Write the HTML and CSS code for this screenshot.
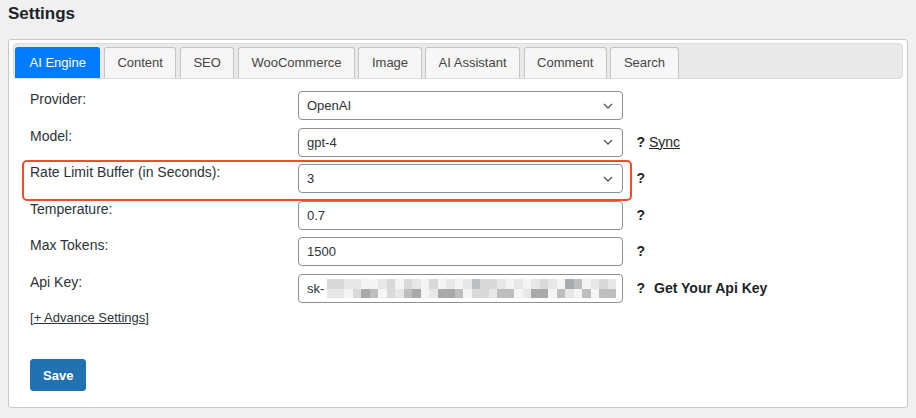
FILE: index.html
```html
<!DOCTYPE html>
<html lang="en">
<head>
<meta charset="utf-8">
<title>Settings</title>
<link rel="stylesheet" href="styles.css">
</head>
<body>
<div class="wrap">
  <h1 class="title">Settings</h1>
  <div class="panel">
    <ul class="tabs">
      <li class="tab active">AI Engine</li>
      <li class="tab">Content</li>
      <li class="tab">SEO</li>
      <li class="tab">WooCommerce</li>
      <li class="tab">Image</li>
      <li class="tab">AI Assistant</li>
      <li class="tab">Comment</li>
      <li class="tab">Search</li>
    </ul>
    <form class="form">
      <div class="rows">
        <div class="row">
          <label class="label">Provider:</label>
          <select class="field select"><option>OpenAI</option></select>
          <span class="extra"></span>
        </div>
        <div class="row">
          <label class="label">Model:</label>
          <select class="field select"><option>gpt-4</option></select>
          <span class="extra"><b class="q">?</b> <a class="link" href="#">Sync</a></span>
        </div>
        <div class="row highlight">
          <label class="label">Rate Limit Buffer (in Seconds):</label>
          <select class="field select"><option>3</option></select>
          <span class="extra"><b class="q">?</b></span>
        </div>
        <div class="row">
          <label class="label">Temperature:</label>
          <input class="field" type="text" value="0.7">
          <span class="extra"><b class="q">?</b></span>
        </div>
        <div class="row">
          <label class="label">Max Tokens:</label>
          <input class="field" type="text" value="1500">
          <span class="extra"><b class="q">?</b></span>
        </div>
        <div class="row">
          <label class="label">Api Key:</label>
          <div class="field keyfield">
            <span class="sk">sk-</span>
            <span class="blur">
              <i class="c"></i><i class="c"></i><i class="b"></i><i class="b"></i><i class="a"></i><i class="a"></i><i class="b"></i><i class="c"></i><i class="a"></i><i class="c"></i><i class="b"></i><i class="a"></i><i class="c"></i><i class="a"></i><i class="b"></i><i class="a"></i><i class="b"></i><i class="d"></i><i class="c"></i><i class="c"></i><i class="b"></i><i class="a"></i><i class="b"></i><i class="a"></i><i class="b"></i><i class="c"></i><i class="b"></i><i class="a"></i><i class="e"></i><i class="d"></i><i class="a"></i><i class="b"></i><i class="c"></i><i class="b"></i>
              <i class="b"></i><i class="b"></i><i class="a"></i><i class="c"></i><i class="e"></i><i class="d"></i><i class="a"></i><i class="c"></i><i class="b"></i><i class="d"></i><i class="e"></i><i class="a"></i><i class="b"></i><i class="e"></i><i class="e"></i><i class="d"></i><i class="a"></i><i class="c"></i><i class="c"></i><i class="b"></i><i class="d"></i><i class="d"></i><i class="a"></i><i class="b"></i><i class="e"></i><i class="e"></i><i class="a"></i><i class="d"></i><i class="b"></i><i class="a"></i><i class="d"></i><i class="a"></i><i class="d"></i><i class="d"></i>
            </span>
          </div>
          <span class="extra"><b class="q">?</b><b class="getkey">Get Your Api Key</b></span>
        </div>
      </div>
      <p class="advance">[<a class="link" href="#">+ Advance Settings</a>]</p>
      <button class="save" type="button">Save</button>
    </form>
  </div>
</div>
</body>
</html>
```

FILE: styles.css
```css
* { box-sizing: border-box; }

html, body {
  margin: 0;
  padding: 0;
  background: #f0f0f1;
}

body {
  font-family: "Liberation Sans", Arial, sans-serif;
  color: #2c3338;
}

.wrap {
  padding: 4px 8px 0;
}

.title {
  margin: 0;
  font-size: 17px;
  line-height: 20px;
  font-weight: bold;
  color: #1d2327;
}

.panel {
  margin-top: 15px;
  background: #fff;
  border: 1px solid #c9c9cb;
  border-radius: 3px;
  padding: 3px 4px 15px;
  height: 369px;
}

.tabs {
  list-style: none;
  margin: 0;
  padding: 3px 1px 0;
  display: flex;
  gap: 3.5px;
  background: #e9e9e9;
  border: 1px solid #dcdcdc;
  border-radius: 4px;
  height: 36px;
}

.tab {
  height: 31px;
  line-height: 30px;
  padding: 0 12.5px;
  font-size: 13px;
  color: #454545;
  background: #f6f6f6;
  border: 1px solid #c5c5c5;
  border-bottom: none;
  border-radius: 3px 3px 0 0;
}

.tab.active {
  background: #007bff;
  border-color: #007bff;
  color: #fff;
  padding: 0 13.5px;
}

.form {
  padding: 12px 17px 0;
}

.rows {
  display: flex;
  flex-direction: column;
  gap: 7.5px;
}

.row {
  position: relative;
  display: grid;
  grid-template-columns: 268px 325px auto;
  align-items: start;
  height: 29px;
}

.row.highlight::before {
  content: "";
  position: absolute;
  left: -8px;
  top: -4px;
  width: 606px;
  height: 37px;
  border: 2px solid #ef4d2b;
  border-radius: 5px;
  pointer-events: none;
}

.label {
  font-size: 14px;
  line-height: 17px;
  color: #2c3338;
}

.field {
  height: 29px;
  width: 325px;
  margin: 0;
  border: 1px solid #8c8f94;
  border-radius: 4px;
  padding: 0 8px;
  font-family: "Liberation Sans", Arial, sans-serif;
  font-size: 13px;
  color: #2c3338;
  background: #fff;
  outline: none;
}

.select {
  appearance: none;
  -webkit-appearance: none;
  background: #fff url("data:image/svg+xml;utf8,<svg xmlns='http://www.w3.org/2000/svg' width='10' height='6' viewBox='0 0 10 6'><polyline points='1,1 5,5 9,1' fill='none' stroke='%2350575e' stroke-width='1.3'/></svg>") no-repeat right 9px center;
  background-size: 10px 6px;
}

.extra {
  align-self: center;
  margin-left: 13.5px;
  font-size: 14px;
  line-height: 17px;
  color: #1d2327;
  white-space: nowrap;
}

.q {
  font-weight: bold;
}

.link {
  color: #1d2327;
  text-decoration: underline;
}

.getkey {
  margin-left: 9px;
  font-weight: bold;
}

.keyfield {
  display: flex;
  align-items: center;
}

.sk {
  margin-right: 3px;
}

.blur {
  display: grid;
  grid-template-columns: repeat(34, 8.5px);
  grid-template-rows: 9.5px 9.5px;
  margin-top: 1px;
}

.blur i { display: block; }
.blur .a { background: #f4f4f4; }
.blur .b { background: #e7e7e7; }
.blur .c { background: #d9d9d9; }
.blur .d { background: #bdbebf; }
.blur .e { background: #a7a9ab; }

.advance {
  margin: 7px 0 0;
  font-size: 13px;
  line-height: 16px;
  color: #2c3338;
}

.advance .link {
  color: #2c3338;
}

.save {
  margin-top: 33.5px;
  height: 32px;
  padding: 0 12px;
  border: 1px solid #2271b1;
  border-radius: 3px;
  background: #2271b1;
  color: #fff;
  font-family: "Liberation Sans", Arial, sans-serif;
  font-size: 13px;
  font-weight: bold;
  cursor: pointer;
}
```
